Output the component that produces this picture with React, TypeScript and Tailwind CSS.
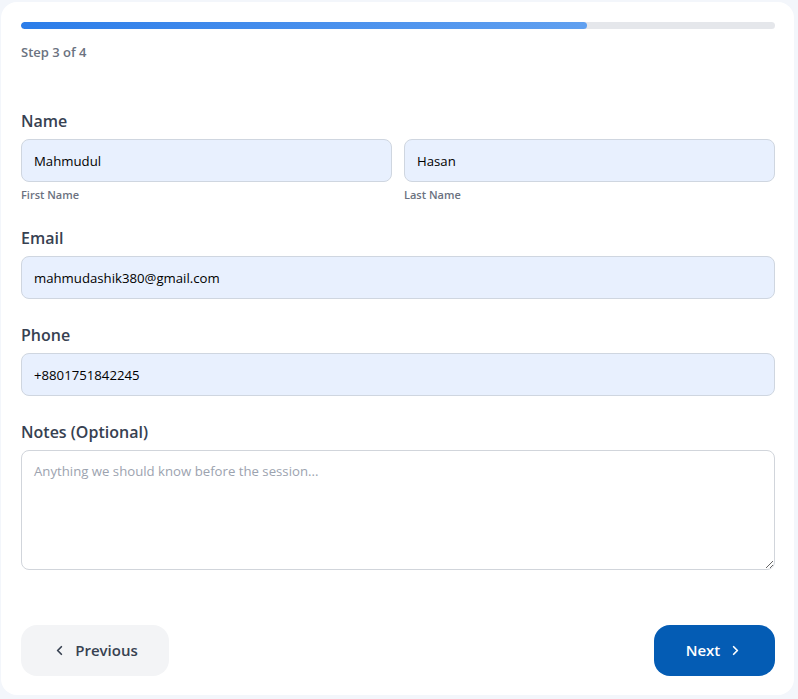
import React from "react";

const font = { fontFamily: '"Open Sans", "Noto Sans", sans-serif' };

function ChevronLeft() {
  return (
    <svg width="15" height="15" viewBox="0 0 24 24" fill="none" stroke="currentColor" strokeWidth="2.75" strokeLinecap="round" strokeLinejoin="round">
      <path d="M15 18l-6-6 6-6" />
    </svg>
  );
}
function ChevronRight() {
  return (
    <svg width="15" height="15" viewBox="0 0 24 24" fill="none" stroke="currentColor" strokeWidth="2.75" strokeLinecap="round" strokeLinejoin="round">
      <path d="M9 18l6-6-6-6" />
    </svg>
  );
}

const inputCls =
  "w-full h-[43px] rounded-lg border border-[#cfd6e0] bg-[#e8f0fe] px-3 text-[13.2px] text-black outline-none";

export default function App() {
  return (
    <div className="min-h-[699px] w-[798px] bg-[#f3f6fb] pt-[2px] pl-[1px]" style={font}>
      <div className="w-[793px] h-[693px] rounded-2xl bg-white pl-5 pr-[19px] pt-5 flex flex-col">
        <div className="h-[7px] w-full rounded-full bg-[#e5e7eb] overflow-hidden">
          <div className="h-full w-3/4 rounded-full bg-gradient-to-r from-[#2b7de9] to-[#60a0f0]" />
        </div>
        <div className="mt-[14px] text-[13px] font-semibold text-[#6b7280] leading-[18px]">Step 3 of 4</div>

        <div className="mt-[48px] text-[16px] font-semibold text-[#374151] leading-[24px]">Name</div>
        <div className="mt-[6px] grid grid-cols-2 gap-3">
          <div>
            <input className={inputCls} defaultValue="Mahmudul" />
            <div className="mt-[5px] text-[11px] font-semibold text-[#6b7280] leading-[16px]">First Name</div>
          </div>
          <div>
            <input className={inputCls} defaultValue="Hasan" />
            <div className="mt-[5px] text-[11px] font-semibold text-[#6b7280] leading-[16px]">Last Name</div>
          </div>
        </div>

        <div className="mt-[23px] text-[16px] font-semibold text-[#374151] leading-[24px]">Email</div>
        <input className={inputCls + " mt-[6px]"} defaultValue="mahmudashik380@gmail.com" />

        <div className="mt-[24px] text-[16px] font-semibold text-[#374151] leading-[24px]">Phone</div>
        <input className={inputCls + " mt-[6px]"} defaultValue="+8801751842245" />

        <div className="mt-[24px] text-[16px] font-semibold text-[#374151] leading-[24px]">Notes (Optional)</div>
        <textarea
          className="mt-[6px] w-full h-[120px] rounded-lg border border-[#d1d5db] bg-white px-3 py-[11px] text-[13.2px] text-black placeholder:text-[#9ca3af] outline-none"
          placeholder="Anything we should know before the session..."
          style={font}
        />

        <div className="mt-[55px] flex justify-between">
          <button className="h-[51px] w-[148px] rounded-2xl bg-[#f3f4f6] text-[#374151] text-[15px] font-semibold flex items-center justify-center gap-2">
            <ChevronLeft />
            Previous
          </button>
          <button className="h-[51px] w-[121px] rounded-2xl bg-[#045cb4] text-white text-[15px] font-semibold flex items-center justify-center gap-2">
            Next
            <ChevronRight />
          </button>
        </div>
      </div>
    </div>
  );
}
